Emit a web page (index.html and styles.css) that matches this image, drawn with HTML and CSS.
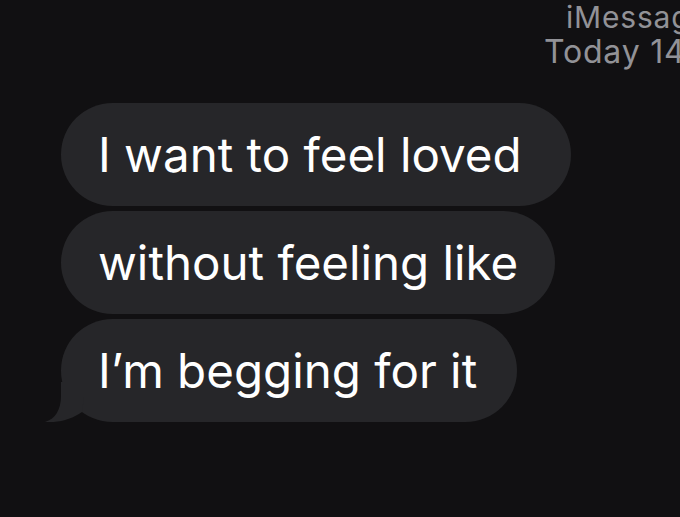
FILE: index.html
```html
<!DOCTYPE html>
<html>
<head>
<meta charset="utf-8">
<link rel="stylesheet" href="styles.css">
</head>
<body>
<div class="screen">
  <div class="header">
    <div class="service">iMessage</div>
    <div class="time">Today 14:32</div>
  </div>
  <div class="thread">
    <div class="bubble bubble-wide">I want to feel loved</div>
    <div class="bubble">without feeling like</div>
    <div class="bubble bubble-last">I’m begging for it<svg class="tail" width="40" height="40" viewBox="0 0 40 40"><path d="M17,0 L17,14 C17,28 11,37 1,40 C15,41 28,37 38,30 L42,0 Z" fill="#262629"/></svg></div>
  </div>
</div>
</body>
</html>
```
FILE: styles.css
```css
html, body {
  margin: 0;
  padding: 0;
  background: #111012;
}
.screen {
  width: 680px;
  height: 517px;
  overflow: hidden;
  background: #111012;
  font-family: Inter, "Noto Sans", sans-serif;
}
.header {
  display: flex;
  flex-direction: column;
  align-items: flex-start;
  color: #929297;
  white-space: nowrap;
  letter-spacing: 0.8px;
}
.service {
  font-size: 30px;
  line-height: 34px;
  margin-left: 566px;
}
.time {
  font-size: 32px;
  line-height: 36px;
  margin-left: 544px;
}
.thread {
  display: flex;
  flex-direction: column;
  align-items: flex-start;
  gap: 5px;
  padding-left: 61px;
  margin-top: 33px;
}
.bubble {
  position: relative;
  background: #262629;
  color: #ffffff;
  font-size: 47.5px;
  line-height: 103px;
  height: 103px;
  padding: 0 37px 0 37px;
  border-radius: 52px;
  white-space: nowrap;
}
.bubble-wide {
  padding-right: 49px;
}
.bubble-last {
  padding-right: 40px;
}
.tail {
  position: absolute;
  left: -17px;
  bottom: 0;
  display: block;
}
```
